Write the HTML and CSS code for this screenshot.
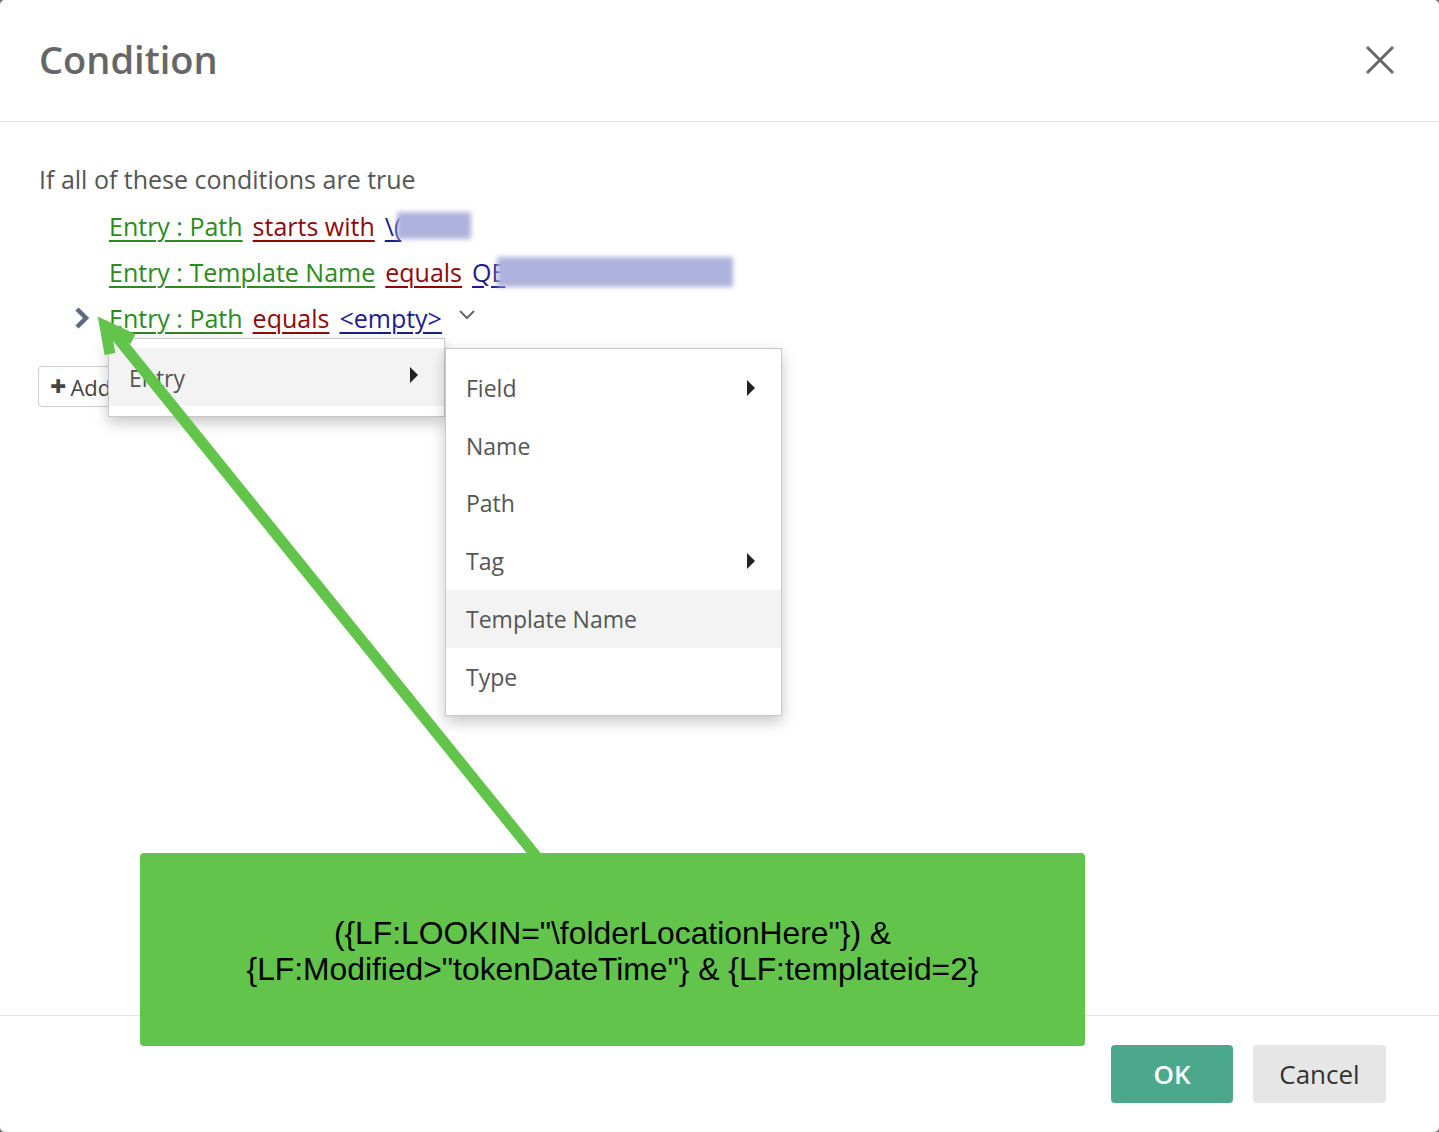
FILE: index.html
```html
<!DOCTYPE html>
<html>
<head>
<meta charset="utf-8">
<link rel="stylesheet" href="styles.css">
</head>
<body>
<div class="dialog">
  <header class="dlg-head">
    <h1 class="title">Condition</h1>
    <svg class="close" width="30" height="30" viewBox="0 0 30 30"><path d="M2 2 L28 28 M28 2 L2 28" stroke="#666" stroke-width="3" fill="none"/></svg>
  </header>
  <main class="dlg-body">
    <p class="intro">If all of these conditions are true</p>
    <div class="rows">
      <div class="row">
        <a class="fld">Entry : Path</a><a class="op">starts with</a><a class="val">\(<span class="blur b1"></span></a>
      </div>
      <div class="row">
        <a class="fld">Entry : Template Name</a><a class="op">equals</a><a class="val">QE<span class="blur b2"></span></a>
      </div>
      <div class="row active">
        <svg class="expander" width="18" height="24" viewBox="0 0 18 24"><path d="M4 3 L13 12 L4 21" stroke="#5b6a80" stroke-width="4.5" fill="none" stroke-linejoin="miter"/></svg>
        <a class="fld">Entry : Path</a><a class="op">equals</a><a class="val">&lt;empty&gt;</a>
        <svg class="caret" width="18" height="12" viewBox="0 0 18 12"><path d="M2 2 L9 9 L16 2" stroke="#666" stroke-width="2" fill="none"/></svg>
      </div>
    </div>
    <button class="add"><span class="plus">+</span>Add</button>
  </main>
  <footer class="dlg-foot">
    <button class="btn ok">OK</button>
    <button class="btn cancel">Cancel</button>
  </footer>
</div>

<div class="menu menu1">
  <div class="item hl">Entry<span class="tri"></span></div>
</div>
<div class="menu menu2">
  <div class="item">Field<span class="tri"></span></div>
  <div class="item">Name</div>
  <div class="item">Path</div>
  <div class="item">Tag<span class="tri"></span></div>
  <div class="item hl">Template Name</div>
  <div class="item">Type</div>
</div>

<svg class="arrow" width="1439" height="1132" viewBox="0 0 1439 1132">
  <path d="M108 326 L536 856" stroke="#62c44a" stroke-width="11" fill="none"/>
  <path d="M133 339 L105 326 L110 354" stroke="#62c44a" stroke-width="11" fill="none" stroke-linejoin="miter"/>
</svg>

<div class="note">
  <p>({LF:LOOKIN="\folderLocationHere"}) &amp;<br>{LF:Modified&gt;"tokenDateTime"} &amp; {LF:templateid=2}</p>
</div>
</body>
</html>
```
FILE: styles.css
```css
html, body {
  margin: 0;
  padding: 0;
}
body {
  background: #777;
  width: 1439px;
  height: 1132px;
  overflow: hidden;
  position: relative;
  font-family: "Open Sans", "Noto Sans", sans-serif;
}
.dialog {
  background: #fff;
  width: 1439px;
  height: 1132px;
  border-radius: 5px;
  display: flex;
  flex-direction: column;
  box-sizing: border-box;
}
.dlg-head {
  height: 122px;
  box-sizing: border-box;
  border-bottom: 1px solid #e5e5e5;
  display: flex;
  align-items: center;
  justify-content: space-between;
  padding: 0 44px 4px 39px;
}
.title {
  margin: 0;
  font-size: 38px;
  font-weight: 600;
  color: #666;
  letter-spacing: 0;
}
.close {
  display: block;
  margin-top: 2px;
}
.dlg-body {
  flex: 1;
  padding: 41px 39px 0 39px;
}
.intro {
  margin: 0;
  font-size: 25px;
  line-height: 33px;
  color: #555;
}
.rows {
  margin-top: 13px;
  display: flex;
  flex-direction: column;
  gap: 13px;
}
.row {
  display: flex;
  align-items: center;
  height: 33px;
  padding-left: 70px;
  font-size: 25px;
  position: relative;
}
.row a {
  text-decoration: underline;
  text-underline-offset: 4px;
  text-decoration-thickness: 2px;
  margin-right: 10px;
  white-space: nowrap;
  display: inline-flex;
  align-items: center;
}
.fld { color: #2c8a1e; }
.op { color: #8e0a0a; }
.val { color: #1c1c8e; }
.blur {
  display: inline-block;
  background: #aeb2dc;
  filter: blur(2.5px);
  height: 27px;
  margin-left: -4px;
}
.b1 { width: 74px; }
.b2 { width: 236px; height: 30px; margin-left: -8px; }
.expander {
  position: absolute;
  left: 34px;
  top: 5px;
}
.caret {
  margin-left: 6px;
  margin-top: -5px;
}
.add {
  margin-top: 32px;
  height: 41px;
  width: 110px;
  border: 1px solid #ccc;
  border-radius: 4px;
  background: #fff;
  font-family: "Open Sans", sans-serif;
  font-size: 22px;
  color: #444;
  display: flex;
  align-items: center;
  padding: 0 0 0 11px;
  margin-left: -1px;
}
.plus {
  font-weight: 800;
  font-size: 28px;
  margin-right: 4px;
  color: #444;
  line-height: 1;
  margin-top: -3px;
}
.dlg-foot {
  height: 117px;
  box-sizing: border-box;
  border-top: 1px solid #e5e5e5;
  display: flex;
  justify-content: flex-end;
  align-items: flex-start;
  padding: 29px 53px 0 0;
  gap: 20px;
}
.btn {
  height: 58px;
  border: none;
  border-radius: 4px;
  font-family: "Open Sans", sans-serif;
  font-size: 26px;
}
.ok {
  width: 122px;
  background: #4ca88a;
  color: #fff;
  font-weight: 600;
}
.cancel {
  width: 133px;
  background: #e6e6e6;
  color: #333;
}
.menu {
  position: absolute;
  background: #fff;
  border: 1px solid #c8c8c8;
  box-shadow: 0 6px 14px rgba(0,0,0,0.22);
  box-sizing: border-box;
}
.menu1 {
  left: 108px;
  top: 338px;
  width: 337px;
  height: 79px;
  padding-top: 9px;
}
.menu2 {
  left: 445px;
  top: 348px;
  width: 337px;
  height: 368px;
  padding-top: 10px;
}
.item {
  height: 57.8px;
  display: flex;
  align-items: center;
  justify-content: space-between;
  padding: 0 26px 0 20px;
  font-size: 23px;
  color: #555;
}
.menu1 .item { padding-top: 2px; height: 58px; box-sizing: border-box; justify-content: space-between; padding-right: 26px; }
.menu1 .item .tri { margin-top: -6px; }
.item.hl { background: #f3f3f3; }
.tri {
  width: 0;
  height: 0;
  border-top: 8px solid transparent;
  border-bottom: 8px solid transparent;
  border-left: 8px solid #222;
}
.arrow {
  position: absolute;
  left: 0;
  top: 0;
  pointer-events: none;
}
.note {
  position: absolute;
  left: 140px;
  top: 853px;
  width: 945px;
  height: 193px;
  background: #62c44a;
  border-radius: 4px;
  display: flex;
  align-items: center;
  justify-content: center;
}
.note p {
  margin: 0;
  padding-top: 2px;
  text-align: center;
  font-family: "Liberation Sans", Arial, sans-serif;
  font-size: 31.8px;
  line-height: 36px;
  color: #000;
}
```
